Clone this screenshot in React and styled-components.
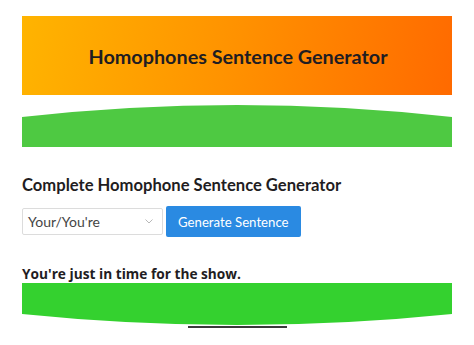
import React from 'react';
import styled, { createGlobalStyle } from 'styled-components';

const GlobalStyle = createGlobalStyle`
  body {
    margin: 0;
    background: #ffffff;
    font-family: "Open Sans", "Noto Sans", sans-serif;
  }
`;

const Page = styled.div`
  display: flex;
  flex-direction: column;
  padding: 16px 22px 0;
`;

const Header = styled.header`
  height: 79px;
  display: flex;
  align-items: center;
  justify-content: center;
  background: linear-gradient(100deg, #ffb400 0%, #ff9100 50%, #ff6a00 100%);
`;

const Title = styled.h1`
  margin: 0 0 0 2px;
  font-family: Lato, "Liberation Sans", sans-serif;
  font-size: 19.8px;
  font-weight: 700;
  color: #1f1d22;
`;

const Wave = styled.svg`
  display: block;
  width: 100%;
  height: 42px;
  margin-top: ${(p) => p.$top || 0}px;
`;

const SectionTitle = styled.h2`
  margin: 28px 0 0;
  font-family: Lato, "Liberation Sans", sans-serif;
  font-size: 16.6px;
  font-weight: 700;
  color: #1f1d22;
  line-height: 20px;
`;

const Controls = styled.div`
  display: flex;
  align-items: center;
  gap: 3px;
  margin-top: 11px;
`;

const Select = styled.div`
  box-sizing: border-box;
  width: 141px;
  height: 27px;
  display: flex;
  align-items: center;
  justify-content: space-between;
  padding: 0 9px 0 5px;
  border: 1px solid #dcdcdc;
  border-radius: 2px;
  font-family: Lato, "Open Sans", sans-serif;
  font-size: 14px;
  color: #454545;
`;

const Button = styled.button`
  height: 31px;
  padding: 0 12px;
  border: none;
  border-radius: 2px;
  background: #2a8ae2;
  color: #ffffff;
  font-family: Lato, "Open Sans", sans-serif;
  font-size: 13.2px;
`;

const Result = styled.p`
  margin: 28px 0 0;
  font-size: 13.7px;
  font-weight: 700;
  color: #1f1d22;
  line-height: 18px;
`;

const Rule = styled.div`
  align-self: center;
  width: 99px;
  height: 2px;
  margin-top: 1px;
  background: #3a3a3a;
`;

const Chevron = () => (
  <svg width="8" height="5" viewBox="0 0 8 5" fill="none">
    <path d="M0.5 0.5l3.5 3.5 3.5-3.5" stroke="#b8b8b8" strokeWidth="1" />
  </svg>
);

const App = () => {
  return (
    <>
      <GlobalStyle />
      <Page>
        <Header>
          <Title>Homophones Sentence Generator</Title>
        </Header>
        <Wave $top={10} viewBox="0 0 432 42" preserveAspectRatio="none">
          <path d="M0 12 Q216 -12 432 12 L432 42 L0 42 Z" fill="#4ec942" />
        </Wave>
        <SectionTitle>Complete Homophone Sentence Generator</SectionTitle>
        <Controls>
          <Select>
            <span>Your/You're</span>
            <Chevron />
          </Select>
          <Button>Generate Sentence</Button>
        </Controls>
        <Result>You're just in time for the show.</Result>
        <Wave viewBox="0 0 432 42" preserveAspectRatio="none">
          <path d="M0 0 H432 V31 Q216 53 0 31 Z" fill="#34d12f" />
        </Wave>
        <Rule />
      </Page>
    </>
  );
};

export default App;
